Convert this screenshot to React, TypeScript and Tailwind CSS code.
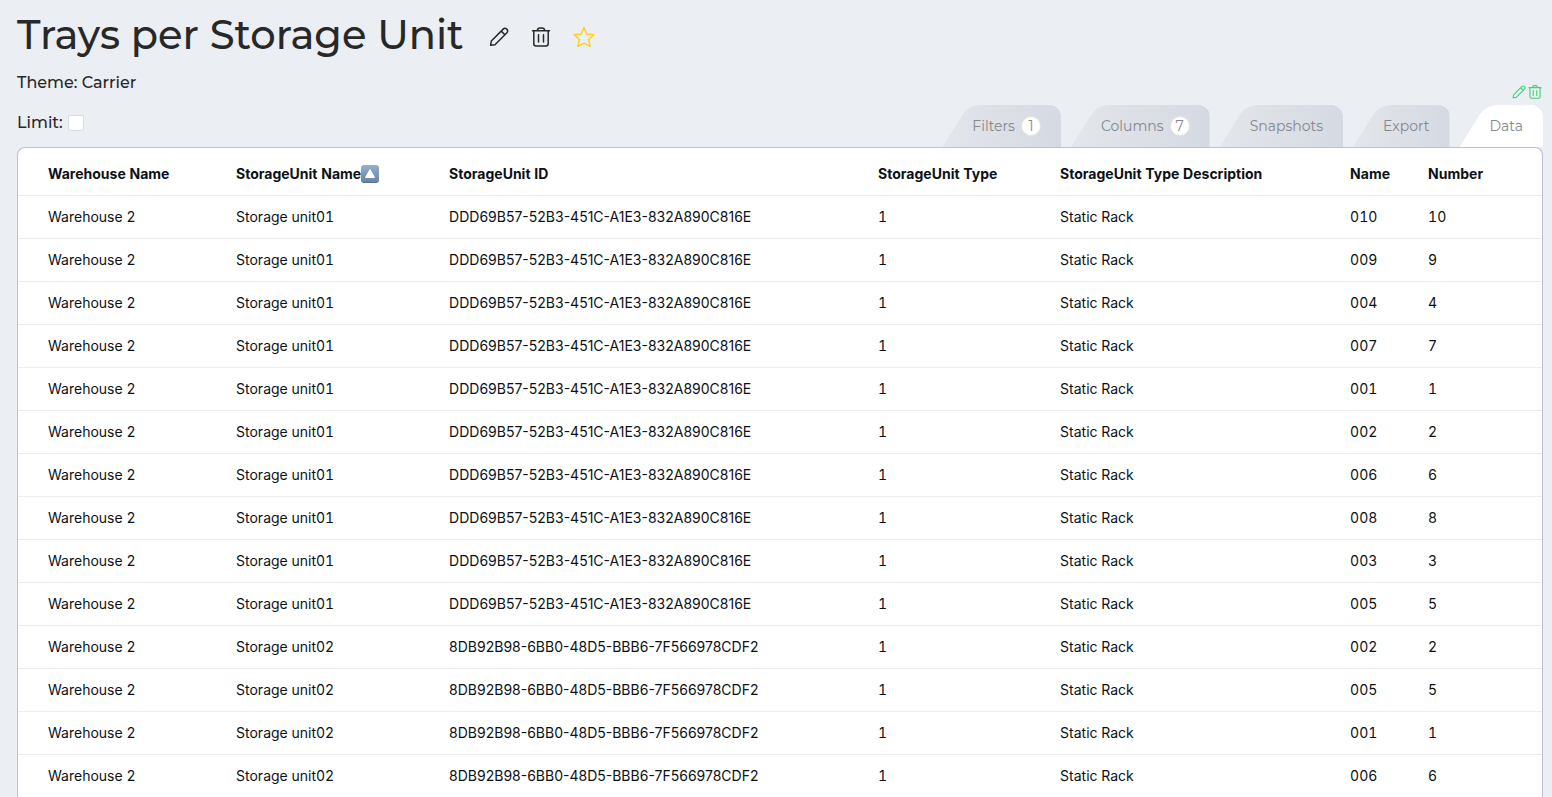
import React from "react";

type IconProps = {
  className: string;
};

type Tab = {
  label: string;
  count?: number;
};

type Tray = {
  unit: string;
  id: string;
  name: string;
};

const tabs: Array<Tab> = [
  { label: "Filters", count: 1 },
  { label: "Columns", count: 7 },
  { label: "Snapshots" },
  { label: "Export" },
  { label: "Data" },
];

const columns = [
  { title: "Warehouse Name", width: "w-[12.34%]" },
  { title: "StorageUnit Name", width: "w-[13.98%]", sorted: true },
  { title: "StorageUnit ID", width: "w-[28.15%]" },
  { title: "StorageUnit Type", width: "w-[11.94%]" },
  { title: "StorageUnit Type Description", width: "w-[19.03%]" },
  { title: "Name", width: "w-[5.12%]" },
  { title: "Number", width: "w-[9.44%]" },
];

const unit01 = "DDD69B57-52B3-451C-A1E3-832A890C816E";
const unit02 = "8DB92B98-6BB0-48D5-BBB6-7F566978CDF2";

const trays: Array<Tray> = [
  ...["010", "009", "004", "007", "001", "002", "006", "008", "003", "005"].map(
    (name) => ({ unit: "Storage unit01", id: unit01, name })
  ),
  ...["002", "005", "001", "006"].map((name) => ({
    unit: "Storage unit02",
    id: unit02,
    name,
  })),
];

const PencilIcon: React.FC<IconProps> = ({ className }) => (
  <svg
    viewBox="0 0 20 20"
    className={className}
    fill="none"
    stroke="currentColor"
    strokeLinecap="round"
    strokeLinejoin="round"
    aria-hidden="true"
  >
    <path d="M1.600 18.300 2.300 14 14.200 2.100c1-1 2.500-1 3.400-.1l.4.4c.9.9.9 2.400-.1 3.400L6 17.700l-4.400.6ZM12.200 4.100l3.700 3.700" />
  </svg>
);

const TrashIcon: React.FC<IconProps> = ({ className }) => (
  <svg
    viewBox="0 0 20 20"
    className={className}
    fill="none"
    stroke="currentColor"
    strokeLinecap="round"
    strokeLinejoin="round"
    aria-hidden="true"
  >
    <path d="M1.500 3.800h17M2.800 3.800v13c0 1.300.9 2.200 2.200 2.200h10c1.300 0 2.200-.9 2.200-2.200v-13M6.300 3.500C6.500 1.800 7.500.9 9 .9h2c1.500 0 2.500.9 2.700 2.600M7.500 7.800v7.200M12.500 7.800v7.200" />
  </svg>
);

const StarIcon: React.FC<IconProps> = ({ className }) => (
  <svg
    viewBox="0 0 22 22"
    className={className}
    fill="none"
    stroke="currentColor"
    strokeLinecap="round"
    strokeLinejoin="round"
    aria-hidden="true"
  >
    <path d="M11 1.500 13.700 8l7.300.7-5.400 4.800 1.500 6.900L11 17.200l-6.100 3.200 1.500-6.900L1 8.700 8.300 8 11 1.500Z" />
  </svg>
);

const SortIcon: React.FC<IconProps> = ({ className }) => (
  <svg viewBox="0 0 18 18" className={className} aria-hidden="true">
    <defs>
      <linearGradient id="sort" x1="0" y1="0" x2="0" y2="1">
        <stop offset="0" stopColor="#93b1cb" />
        <stop offset="1" stopColor="#6482a0" />
      </linearGradient>
    </defs>
    <rect width="18" height="18" rx="3" fill="url(#sort)" />
    <path d="M2 17.500h14" stroke="#56738f" />
    <path
      d="M9 4.500 13.500 12.500h-9L9 4.500Z"
      fill="#fff"
      stroke="#fff"
      strokeLinejoin="round"
    />
  </svg>
);

const TabButton: React.FC<{ tab: Tab; active: boolean }> = ({ tab, active }) => (
  <button
    type="button"
    role="tab"
    aria-selected={active}
    className={`flex h-[42px] items-center gap-1.5 rounded-tr-xl pr-5 pl-[30px] text-sm text-[#85888f] [clip-path:polygon(0_42px,20px_10px,24px_5px,29px_2px,36px_0,100%_0,100%_42px)] ${
      active ? "bg-white" : "bg-linear-to-r from-[#e3e6ea] to-[#d5d9e2]"
    }`}
  >
    {tab.label}
    {tab.count && (
      <span className="flex size-5 items-center justify-center rounded-full border border-[#e4e4e4] bg-white">
        {tab.count}
      </span>
    )}
  </button>
);

const App: React.FC = () => {
  return (
    <main className="flex h-screen flex-col overflow-hidden bg-[#ebeef3] pr-[9px] pl-[17px] font-['Montserrat','Inter',sans-serif] font-medium text-[#282828]">
      <header className="flex items-center pt-[7px]">
        <h1 className="text-[40px] leading-[56px]">Trays per Storage Unit</h1>
        <div className="ml-[25px] flex items-center gap-[22px] pt-1">
          <button type="button" aria-label="Edit">
            <PencilIcon className="size-5 stroke-[1.5]" />
          </button>
          <button type="button" aria-label="Delete">
            <TrashIcon className="size-5 stroke-[1.5]" />
          </button>
          <button type="button" aria-label="Favorite" className="text-[#ffd21f]">
            <StarIcon className="size-[22px] stroke-[1.5]" />
          </button>
        </div>
      </header>

      <div className="flex items-end justify-between">
        <div className="flex flex-col gap-4 pb-3">
          <p className="pt-2">Theme: Carrier</p>
          <label className="flex items-center gap-[5px]">
            Limit:
            <input
              type="checkbox"
              className="size-4 appearance-none rounded-xs border border-[#d9dbdf] bg-white"
            />
          </label>
        </div>
        <div className="flex flex-col items-end">
          <div className="flex gap-0.5 pr-px pb-1.5 text-[#3dd47b]">
            <button type="button" aria-label="Edit tab">
              <PencilIcon className="size-3.5 stroke-[1.6]" />
            </button>
            <button type="button" aria-label="Delete tab">
              <TrashIcon className="size-3.5 stroke-[1.6]" />
            </button>
          </div>
          <div role="tablist" className="flex gap-2.5 font-normal">
            {tabs.map((tab) => (
              <TabButton tab={tab} active={tab.label === "Data"} key={tab.label} />
            ))}
          </div>
        </div>
      </div>

      <section className="min-h-0 flex-1 overflow-hidden rounded-t-lg border border-b-0 border-[#bcbfd6] bg-white">
        <table className="w-full table-fixed text-left font-['Inter',sans-serif] text-sm font-normal tabular-nums text-[#0c1116]">
          <thead>
            <tr className="h-[47px] border-b border-[#ebecef]">
              {columns.map(({ title, width, sorted }) => (
                <th
                  scope="col"
                  className={`${width} pt-1.5 pl-[30px] font-bold whitespace-nowrap`}
                  key={title}
                >
                  <span className="flex items-center">
                    {title}
                    {sorted && <SortIcon className="size-[18px]" />}
                  </span>
                </th>
              ))}
            </tr>
          </thead>
          <tbody>
            {trays.map((tray, index) => (
              <tr className="h-[43px] border-b border-[#ebecef]" key={index}>
                <td className="pl-[30px]">Warehouse 2</td>
                <td className="pl-[30px]">{tray.unit}</td>
                <td className="pl-[30px] normal-nums">{tray.id}</td>
                <td className="pl-[30px]">1</td>
                <td className="pl-[30px]">Static Rack</td>
                <td className="pl-[30px]">{tray.name}</td>
                <td className="pl-[30px]">{Number(tray.name)}</td>
              </tr>
            ))}
          </tbody>
        </table>
      </section>
    </main>
  );
};

export default App;
